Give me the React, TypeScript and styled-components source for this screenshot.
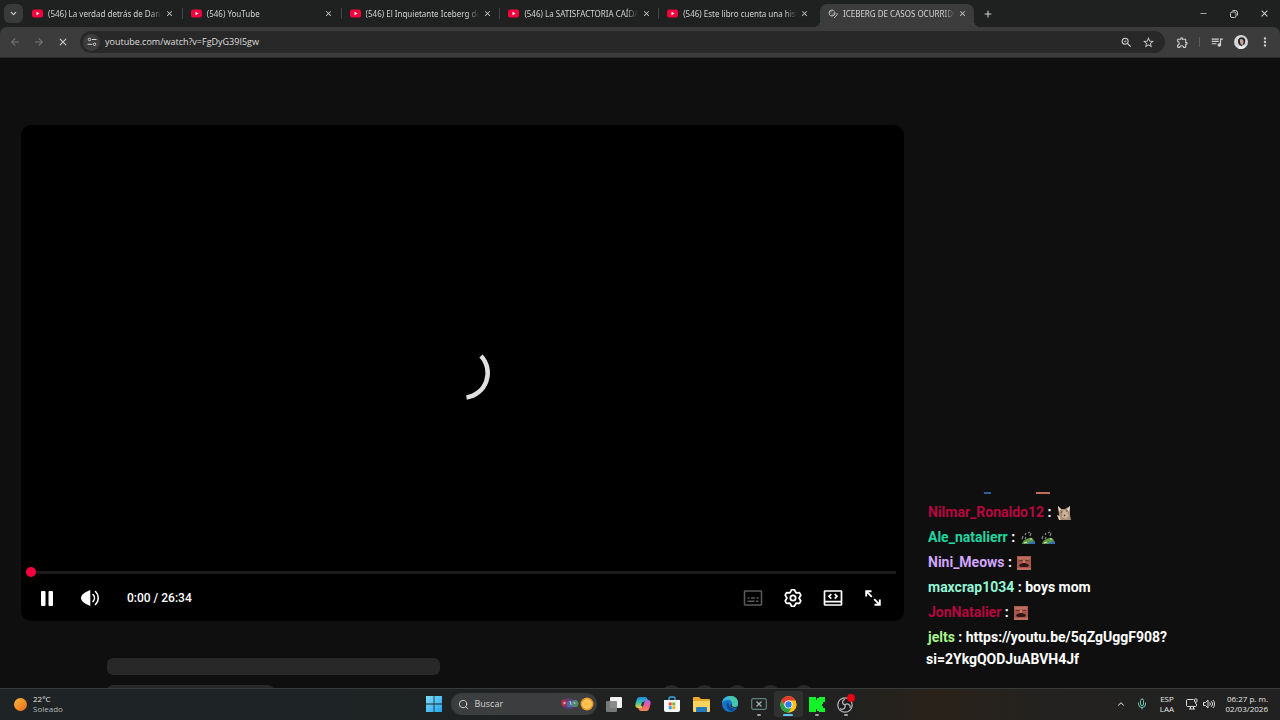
import React from "react";
import styled, { createGlobalStyle } from "styled-components";
import {
  MdArrowBack,
  MdArrowForward,
  MdClose,
  MdMoreVert,
  MdOutlineExtension,
  MdQueueMusic,
  MdStarOutline,
  MdZoomIn,
} from "react-icons/md";
import { ChevronDown, ChevronUp, Mic, Minus, Plus, Search } from "lucide-react";

const GlobalStyle = createGlobalStyle`
  * { box-sizing: border-box; }
  body {
    margin: 0;
    background: #0f0f0f;
    color: #e3e3e3;
    font-family: "Open Sans", "Noto Sans", sans-serif;
  }
  button, input { font: inherit; color: inherit; }
  svg { display: block; flex: none; }
`;

const Shell = styled.div`
  display: flex;
  flex-direction: column;
  height: 100vh;
  overflow: hidden;
`;

const IconButton = styled.button<{ $w?: number; $h?: number; $color?: string; $bg?: string; $radius?: number }>`
  display: flex;
  align-items: center;
  justify-content: center;
  flex: none;
  width: ${(p) => p.$w ?? 20}px;
  height: ${(p) => p.$h ?? 20}px;
  padding: 0;
  border: 0;
  border-radius: ${(p) => p.$radius ?? 0}px;
  background: ${(p) => p.$bg ?? "transparent"};
  color: ${(p) => p.$color ?? "#d0d0d0"};
`;

/* ---------- Browser frame ---------- */

const TabStrip = styled.header`
  display: flex;
  align-items: stretch;
  flex: none;
  height: 27px;
  padding-left: 4px;
  background: #1f2020;
`;

const StripSlot = styled.div`
  display: flex;
  align-items: center;
`;

const TabList = styled.nav`
  display: flex;
  flex: 0 1 950px;
  min-width: 0;
  margin-left: 1px;
`;

const Tab = styled.div<{ $active?: boolean; $divider?: boolean }>`
  position: relative;
  display: flex;
  align-items: center;
  flex: ${(p) => (p.$active ? "0 1 154px" : "1 1 0")};
  min-width: 0;
  margin-top: ${(p) => (p.$active ? 4 : 0)}px;
  margin-left: ${(p) => (p.$active ? 2 : 0)}px;
  padding: 0 ${(p) => (p.$active ? 3 : 5)}px 0 8px;
  padding-bottom: ${(p) => (p.$active ? 4 : 0)}px;
  border-radius: 7px 7px 0 0;
  background: ${(p) => (p.$active ? "#3c3c3c" : "transparent")};

  &::after {
    content: "";
    display: ${(p) => (p.$divider ? "block" : "none")};
    position: absolute;
    right: 0;
    top: 8px;
    width: 1px;
    height: 11px;
    background: #454646;
  }
`;

const TabFoot = styled.span<{ $side: "left" | "right" }>`
  position: absolute;
  bottom: 0;
  ${(p) => p.$side}: -6px;
  width: 6px;
  height: 6px;
  background: radial-gradient(
    circle at ${(p) => (p.$side === "left" ? "0 0" : "100% 0")},
    transparent 6px,
    #3c3c3c 6px
  );
`;

const TabTitle = styled.button`
  flex: 1;
  min-width: 0;
  margin-left: 5px;
  padding: 0;
  border: 0;
  overflow: hidden;
  background: none;
  color: #d5d5d5;
  font-family: "Noto Sans", "Open Sans", sans-serif;
  font-size: 8px;
  line-height: 12px;
  text-align: left;
  white-space: nowrap;
  mask-image: linear-gradient(90deg, #000 calc(100% - 12px), transparent);
`;

const WindowControls = styled.div`
  display: flex;
  align-items: center;
  margin-left: auto;
`;

const Toolbar = styled.div`
  display: flex;
  align-items: center;
  flex: none;
  height: 31px;
  padding: 0 5px 0 4px;
  border-bottom: 1px solid #2a2a2a;
  border-radius: 7px 7px 0 0;
  background: #3c3c3c;
`;

const ToolbarBack = styled.div`
  flex: none;
  background: #1f2020;
`;

const Omnibox = styled.form`
  display: flex;
  align-items: center;
  flex: 1;
  min-width: 0;
  height: 22px;
  margin: 0 7px 0 6px;
  padding: 0 6px 0 3px;
  border-radius: 11px;
  background: #282828;
`;

const UrlInput = styled.input`
  flex: 1;
  min-width: 0;
  margin-left: 5px;
  padding: 0;
  border: 0;
  outline: 0;
  background: none;
  color: #dedede;
  font-size: 9px;
  line-height: 14px;
`;

const Rule = styled.span`
  width: 1px;
  height: 10px;
  margin: 0 7px;
  background: #5c5c5c;
`;

/* ---------- Watch page ---------- */

const Page = styled.main`
  display: grid;
  grid-template-columns: minmax(0, 1fr) 354px;
  grid-template-rows: minmax(0, 1fr);
  column-gap: 22px;
  flex: 1;
  min-height: 0;
  padding-left: 21px;
  overflow: hidden;
  background: #0f0f0f;
`;

const Watch = styled.section`
  padding-top: 67px;
  min-width: 0;
`;

const Player = styled.div`
  display: flex;
  flex-direction: column;
  aspect-ratio: 883 / 496;
  border-radius: 10px;
  background: #000;
`;

const Stage = styled.div`
  display: flex;
  align-items: center;
  justify-content: center;
  flex: 1;
  padding-top: 53px;
`;

const Progress = styled.input`
  appearance: none;
  height: 10px;
  margin: 0 8px 0 5px;
  background: transparent;

  &::-webkit-slider-runnable-track {
    height: 3px;
    background: #1c1c1c;
  }
  &::-webkit-slider-thumb {
    appearance: none;
    width: 10px;
    height: 10px;
    margin-top: -4px;
    border-radius: 50%;
    background: #f5003d;
  }
`;

const Controls = styled.div`
  display: flex;
  align-items: center;
  height: 44px;
  padding: 0 11px 2px 6px;
  font-family: Roboto, sans-serif;
`;

const Time = styled.span`
  margin-left: 14px;
  color: #fff;
  font-size: 12px;
  font-weight: 500;
  line-height: 16px;
`;

const ControlsEnd = styled.div`
  display: flex;
  margin-left: auto;
`;

const Skeletons = styled.div`
  display: flex;
  justify-content: space-between;
  padding: 37px 90px 0 86px;
`;

const SkeletonLines = styled.div`
  display: flex;
  flex-direction: column;
  gap: 10px;
  width: 333px;
`;

const SkeletonLine = styled.div<{ $width: string }>`
  width: ${(p) => p.$width};
  height: 17px;
  border-radius: 6px;
  background: #282828;
`;

const SkeletonDots = styled.div`
  display: flex;
  gap: 12px;
  padding-top: 27px;
`;

const SkeletonDot = styled.div`
  width: 21px;
  height: 21px;
  border-radius: 50%;
  background: #282828;
`;

/* ---------- Chat ---------- */

const Chat = styled.aside`
  display: flex;
  flex-direction: column;
  justify-content: flex-end;
  align-self: end;
  gap: 3px;
  width: 256px;
  height: 196px;
  padding-bottom: 18px;
  overflow: hidden;
  color: #fff;
  font-family: Roboto, sans-serif;
  font-size: 14px;
  font-weight: 700;
  line-height: 22px;
`;

const Message = styled.p`
  flex: none;
  margin: 0;
`;

const EmoteRow = styled.div`
  display: flex;
  flex: none;
  align-items: center;
  gap: 36px;
  height: 22px;
  padding-left: 52px;
`;

const Author = styled.span<{ $color: string }>`
  padding-left: 2px;
  color: ${(p) => p.$color};
`;

const ChatLink = styled.a`
  color: inherit;
  text-decoration: none;
`;

const Emote = styled.svg`
  display: inline-block;
  margin: 0 4px 0 2px;
  vertical-align: -3px;
`;

/* ---------- Taskbar ---------- */

const Taskbar = styled.footer`
  display: grid;
  grid-template-columns: 1fr auto 1fr;
  align-items: center;
  flex: none;
  height: 32px;
  padding-bottom: 1px;
  border-top: 1px solid #3a3c3c;
  background: linear-gradient(90deg, #1e2425 0%, #1e2425 25%, #202121 45%, #202120 66%, #29221a 73%, #232221 82%, #212121 100%);
  font-size: 8px;
  line-height: 10px;
`;

const Weather = styled.div`
  display: flex;
  align-items: center;
  gap: 6px;
  padding-left: 14px;
`;

const Sun = styled.span`
  width: 13px;
  height: 13px;
  border-radius: 50%;
  background: linear-gradient(135deg, #f9b83e, #ea6a17);
`;

const Muted = styled.span`
  display: block;
  color: #b4b7b8;
`;

const Apps = styled.div`
  display: flex;
  align-items: center;
`;

const AppButton = styled.button<{ $focused?: boolean; $running?: boolean }>`
  position: relative;
  display: flex;
  align-items: center;
  justify-content: center;
  width: 29px;
  height: 26px;
  padding: 0;
  border: 0;
  border-radius: 3px;
  background: ${(p) => (p.$focused ? "#2f3030" : "transparent")};

  &::after {
    content: "";
    display: ${(p) => (p.$running ? "block" : "none")};
    position: absolute;
    bottom: 1px;
    left: calc(50% - ${(p) => (p.$focused ? 5 : 2)}px);
    width: ${(p) => (p.$focused ? 10 : 4)}px;
    height: 2px;
    border-radius: 1px;
    background: ${(p) => (p.$focused ? "#5cc3f0" : "#a0a0a0")};
  }
`;

const SearchBox = styled.label`
  display: flex;
  align-items: center;
  gap: 6px;
  width: 146px;
  height: 22px;
  margin: 0 3px 0 2px;
  padding: 0 2px 0 7px;
  border-radius: 11px;
  background: #3b3d3e;
`;

const SearchInput = styled.input`
  flex: 1;
  min-width: 0;
  padding: 0;
  border: 0;
  outline: 0;
  background: none;
  font-size: 9px;
  line-height: 14px;
  &::placeholder { color: #d2d2d2; opacity: 1; }
`;

const Tray = styled.div`
  display: flex;
  align-items: center;
  justify-content: flex-end;
  padding-right: 12px;
`;

const TrayText = styled.div<{ $w: number; $align: string }>`
  width: ${(p) => p.$w}px;
  text-align: ${(p) => p.$align};
  color: #e6e6e6;
  white-space: nowrap;
`;

/* ---------- Drawings ---------- */

const YouTubeMark = () => (
  <svg width="11" height="9" viewBox="0 0 22 18" aria-hidden="true">
    <rect y="1" width="22" height="16" rx="4" fill="#f5003d" />
    <path d="M9 5.500v7l6-3.500z" fill="#fff" />
  </svg>
);

const LoadingMark = () => (
  <svg width="10" height="10" viewBox="0 0 20 20" fill="none" stroke="#b5b5b5" strokeWidth="2" aria-hidden="true">
    <circle cx="8" cy="8" r="6" fill="#6b6b6b" />
    <path d="M4 12L13 3" stroke="#3c3c3c" strokeWidth="2.500" />
    <path d="M18 8v4l-6 6" />
  </svg>
);

const RestoreMark = () => (
  <svg width="8" height="8" viewBox="0 0 16 16" fill="none" stroke="#d8d8d8" strokeWidth="1.800" aria-hidden="true">
    <rect x="1" y="4" width="11" height="11" rx="3" />
    <path d="M5 1h6a4 4 0 0 1 4 4v6" />
  </svg>
);

const SiteMark = () => (
  <svg width="10" height="10" viewBox="0 0 20 20" fill="none" stroke="#d5d5d5" strokeWidth="2" aria-hidden="true">
    <circle cx="5" cy="5" r="2.500" />
    <path d="M10 5h9M1 14.500h9" />
    <circle cx="15" cy="14.500" r="2.500" />
  </svg>
);

const Avatar = () => (
  <svg width="14" height="14" viewBox="0 0 28 28" aria-hidden="true">
    <circle cx="14" cy="14" r="14" fill="#d3d6d7" />
    <path d="M8 12C8 4 20 2 22 9c1 5 0 8-2 11l-2-1-3 4-4-3c-2-2-3-4-3-8z" fill="#24252a" />
    <path d="M12 9c4-2 6 0 7 3 0 4-1 8-3 8s-5-5-4-11z" fill="#c99e96" />
    <path d="M8 27l4-6 5 3 3-3 3 3c-4 4-10 5-15 3z" fill="#efefef" />
  </svg>
);

const Spinner = () => (
  <svg width="56" height="56" viewBox="0 0 56 56" fill="none" aria-label="Cargando" role="img">
    <path d="M46 11A24.800 24.800 0 0 1 31.500 52.500" stroke="#e0e0e0" strokeWidth="4.500" />
  </svg>
);

const PauseMark = () => (
  <svg width="14" height="16" viewBox="0 0 14 16" fill="#fff" aria-hidden="true">
    <rect x="1" y="1" width="4.500" height="15" rx="1" />
    <rect x="8.500" y="1" width="4.500" height="15" rx="1" />
  </svg>
);

const VolumeMark = () => (
  <svg width="20" height="18" viewBox="0 0 20 18" fill="none" stroke="#fff" strokeWidth="1.600" strokeLinecap="round" aria-hidden="true">
    <path d="M10.300 1v16C6 15.500 1 12.500 1 9s5-6.500 9.300-8z" fill="#fff" stroke="none" />
    <path d="M13 5.500a5 5 0 0 1 0 7M15.500 2.500a9 9 0 0 1 0 13" />
  </svg>
);

const CaptionsMark = () => (
  <svg width="20" height="18" viewBox="0 0 20 18" fill="none" stroke="#5b5b5b" strokeWidth="1.500" aria-hidden="true">
    <rect x="1.500" y="2" width="17" height="14" rx=".6" />
    <path d="M4.500 9h2M8 9h4M13.500 9h2M4.500 12.300h7M13 12.300h2.500" />
  </svg>
);

const GearMark = () => (
  <svg width="22" height="22" viewBox="0 0 24 24" fill="none" stroke="#fff" strokeWidth="1.900" strokeLinejoin="round" aria-hidden="true">
    <path d="M10.500 3h3l1.800 3.300 3.740-.1 1.500 2.600L18.600 12l1.940 3.200-1.500 2.600-3.740-.1L13.500 21h-3l-1.800-3.300-3.740.1-1.500-2.600L5.400 12 3.460 8.800l1.500-2.600 3.740.1z" />
    <circle cx="12" cy="12" r="2.900" />
  </svg>
);

const TheaterMark = () => (
  <svg width="20" height="18" viewBox="0 0 20 18" fill="none" stroke="#fff" strokeWidth="1.700" aria-hidden="true">
    <rect x="1.500" y="2" width="17" height="14" rx=".6" />
    <path d="M1.500 12.700h17M8.300 5L6 7.300l2.300 2.300M11.700 5L14 7.300l-2.300 2.300" />
  </svg>
);

const FullscreenMark = () => (
  <svg width="18" height="18" viewBox="0 0 18 18" fill="none" stroke="#fff" strokeWidth="1.900" aria-hidden="true">
    <path d="M2.200 7.500V2.200h5.300M2.200 2.200l5.600 5.600M15.800 10.500v5.300h-5.300M15.800 15.800l-5.600-5.600" />
  </svg>
);

const CatEmote = () => (
  <Emote width="14" height="14" viewBox="0 0 14 14" aria-hidden="true">
    <path d="M1 0l3 3h4l5-3v9l1 5H4L2 9z" fill="#a98d75" />
    <path d="M1 0l3 3-2 3zM13 0l-3 3 2 3z" fill="#e5ddd2" />
    <path d="M5 5l2-1 3 1 2 5-3 3-4-2z" fill="#c9b19a" />
    <path d="M4 6h1.500M9 5h1.500M7 9l1 1" stroke="#4a382c" strokeWidth="1.200" />
    <path d="M0 9l3 1 1 4H2z" fill="#d8c8b3" />
  </Emote>
);

const FrogEmote = () => (
  <Emote width="14" height="14" viewBox="0 0 14 14" aria-hidden="true">
    <path d="M1 13c1-4 4-5 7-6 3-1 5 1 5 4l-3 2z" fill="#5d9a43" />
    <path d="M7 12l7-2v3H8z" fill="#2f6fc0" />
    <path d="M9 8h2M3 12l3-1" stroke="#d9e8d0" strokeWidth="1" />
    <path d="M1 8l1-3M4 4l1-2M7 2l2-1M10 2l-1 3M4 8l1-2" stroke="#85898c" strokeWidth="1.200" />
  </Emote>
);

const FaceEmote = () => (
  <Emote width="14" height="14" viewBox="0 0 14 14" aria-hidden="true">
    <rect width="14" height="14" fill="#a8574a" />
    <path d="M1 1h12v2.500H1z" fill="#bd705e" />
    <path d="M2 4.500h3.500M8.500 4.500H12" stroke="#6b332d" strokeWidth="1.200" />
    <path d="M6 4h2v4H6z" fill="#c77b68" />
    <path d="M2 10c0-2 3-3 5-3s5 1 5 3l-2 1H4z" fill="#2f1516" />
    <path d="M0 12h14v2H0z" fill="#be6e5c" />
  </Emote>
);

const BlueEmote = () => (
  <Emote width="14" height="14" viewBox="0 0 14 14" aria-hidden="true">
    <path d="M3 3h8v11H4z" fill="#2d5f9e" />
  </Emote>
);

const StartMark = () => (
  <svg width="16" height="16" viewBox="0 0 16 16" fill="url(#startFill)" aria-hidden="true">
    <defs>
      <linearGradient id="startFill" x1="0" y1="0" x2="1" y2="1">
        <stop offset="0" stopColor="#7fdcfb" />
        <stop offset="1" stopColor="#24a5ee" />
      </linearGradient>
    </defs>
    <path d="M0 0h7.600v7.600H0zM8.400 0H16v7.600H8.400zM0 8.400h7.600V16H0zM8.400 8.400H16V16H8.400z" />
  </svg>
);

const SearchArt = () => (
  <svg width="35" height="16" viewBox="0 0 35 16" aria-hidden="true">
    <ellipse cx="9" cy="7.500" rx="7.500" ry="5.500" fill="#543d70" />
    <circle cx="4.500" cy="7" r="3.500" fill="#a92f4b" />
    <circle cx="4.500" cy="7" r="1.200" fill="#e9a3b0" />
    <circle cx="10" cy="8" r="3.500" fill="#4b6ba8" />
    <circle cx="15" cy="7.500" r="3.500" fill="#55886b" />
    <path d="M10 5l1 4M14 6l1 2" stroke="#b8d0e8" strokeWidth="1" />
    <circle cx="27" cy="8" r="6.500" fill="#ee9c22" />
    <circle cx="27" cy="8" r="4.200" fill="#f9bd4a" stroke="#fbd377" />
  </svg>
);

const TaskViewMark = () => (
  <svg width="16" height="15" viewBox="0 0 16 15" aria-hidden="true">
    <rect x="4" y="0" width="12" height="11" rx="1" fill="#f1f1f1" />
    <rect x="0" y="4" width="11" height="11" rx="1" fill="#818181" opacity=".92" />
  </svg>
);

const CopilotMark = () => (
  <svg width="16" height="16" viewBox="0 0 16 16" aria-hidden="true">
    <defs>
      <linearGradient id="copilotLeft" x1="0" y1="0" x2="0" y2="1">
        <stop offset="0" stopColor="#2488ee" />
        <stop offset=".5" stopColor="#35c4a4" />
        <stop offset="1" stopColor="#f0cd39" />
      </linearGradient>
      <linearGradient id="copilotRight" x1="0" y1="0" x2="0" y2="1">
        <stop offset="0" stopColor="#a267ed" />
        <stop offset=".5" stopColor="#f05a94" />
        <stop offset="1" stopColor="#f48b46" />
      </linearGradient>
    </defs>
    <path d="M6 1h4c2 0 2 2 3 3l-4 1-2 7H3C0 12 0 9 1 6l1-3c1-2 2-2 4-2z" fill="url(#copilotLeft)" />
    <path d="M10 15H6c-2 0-2-2-3-3h3c1 0 2-1 2-2l2-6h3c3 0 3 3 2 6l-1 3c-1 2-2 2-4 2z" fill="url(#copilotRight)" />
    <path d="M7 6h2l-1 4H6z" fill="#263040" />
  </svg>
);

const StoreMark = () => (
  <svg width="16" height="17" viewBox="0 0 16 17" aria-hidden="true">
    <path d="M5 5V2.500Q5 1 6.500 1h3Q11 1 11 2.500V5" fill="none" stroke="#35a8e2" strokeWidth="1.400" />
    <path d="M0 4h16v10q0 2-2 2H2q-2 0-2-2z" fill="#f4f6f7" />
    <path d="M4.700 6.500h3v3h-3z" fill="#e8502f" />
    <path d="M8.300 6.500h3v3h-3z" fill="#7cb52c" />
    <path d="M4.700 10.200h3v3h-3z" fill="#2b9fe0" />
    <path d="M8.300 10.200h3v3h-3z" fill="#f3b51d" />
  </svg>
);

const FolderMark = () => (
  <svg width="17" height="15" viewBox="0 0 17 15" aria-hidden="true">
    <path d="M0 1q0-1 1-1h5l2 2h8q1 0 1 1v11H0z" fill="#e7a92c" />
    <path d="M0 4h17v10q0 1-1 1H1q-1 0-1-1z" fill="#fbd45f" />
    <path d="M3 15v-4q0-1 1-1h9q1 0 1 1v4z" fill="#2579be" />
  </svg>
);

const EdgeMark = () => (
  <svg width="16" height="16" viewBox="0 0 16 16" aria-hidden="true">
    <circle cx="8" cy="8" r="8" fill="#1674c6" />
    <path d="M0 7C1 2 4 0 8 0c5 0 8 3 8 7 0 3-2 4-4 4-2 0-3-1-2-2 1-3-1-5-4-5-3 0-5 1-6 3z" fill="#38b6e0" />
    <path d="M9 0c4 0 7 3 7 7 0 3-2 4-4 4-2 0-3-1-2-2 1-2 0-3-1-4 0-2-1-3-3-4z" fill="#46c8a8" />
    <path d="M6 6c-3 3-1 8 3 9 2 0 4-1 6-3-4 2-8-1-9-6z" fill="#0b4a94" />
    <path d="M8.500 8c-.5 3 3 4.500 6.500 3.500l.5-.5-3 0c-2 0-3-1-2.500-2z" fill="#202121" />
  </svg>
);

const XBoxMark = () => (
  <svg width="16" height="12" viewBox="0 0 16 12" fill="none" stroke="#62827f" aria-hidden="true">
    <rect x=".7" y=".7" width="14.600" height="10.600" rx="1.500" strokeWidth="1.200" />
    <path d="M5.500 3.500l5 5M10.500 3.500l-5 5" stroke="#9dbab5" strokeWidth="1.200" />
  </svg>
);

const ChromeMark = () => (
  <svg width="17" height="17" viewBox="0 0 48 48" aria-hidden="true">
    <circle cx="24" cy="24" r="23" fill="#fbc116" />
    <path d="M4 12.500A23 23 0 0 0 23.500 47L34 29.500 24 24l-10 5.500z" fill="#25a04b" />
    <path d="M4 12.500A23 23 0 0 1 43.900 12.500H24A11.500 11.500 0 0 0 13 27z" fill="#e33b2e" />
    <circle cx="24" cy="24" r="11.500" fill="#fff" />
    <circle cx="24" cy="24" r="9" fill="#2f7de9" />
  </svg>
);

const KickMark = () => (
  <svg width="16" height="15" viewBox="0 0 16 15" aria-hidden="true">
    <path d="M0 0h7v3h1V1h2V0h6v5h-2v2h-1v2h1v2h2v4h-6v-1H8v-2H7v3H0z" fill="#12f32a" />
  </svg>
);

const ObsMark = () => (
  <svg width="18" height="20" viewBox="0 0 18 20" aria-hidden="true">
    <circle cx="8" cy="11" r="7.200" fill="#1c1c1e" stroke="#b9b9b9" strokeWidth="1.200" />
    <path d="M8 11C4.500 10 5 6 8 5.500M8 11c2.500-2.500 6 0 5 3M8 11c1 3.500-2.500 5.500-5 3.500" fill="none" stroke="#b9b9b9" strokeWidth="1.200" />
    <circle cx="14" cy="4" r="4" fill="#e60012" />
  </svg>
);

const NetworkMark = () => (
  <svg width="12" height="12" viewBox="0 0 12 12" fill="none" stroke="#dcdcdc" aria-hidden="true">
    <path d="M7.500 1.500H1.500q-1 0-1 1v5q0 1 1 1h8q1 0 1-1V6M3 11h6M4.500 8.500V11M7.500 8.500V11" />
    <rect x="8.500" y="1" width="2.500" height="3" rx=".5" />
    <path d="M9.700 4v2" />
  </svg>
);

const SpeakerMark = () => (
  <svg width="12" height="10" viewBox="0 0 12 10" fill="none" stroke="#dcdcdc" strokeLinejoin="round" aria-hidden="true">
    <path d="M.5 3.500h2L5 1v8L2.500 6.500h-2zM6.700 3.500a2 2 0 0 1 0 3M8.300 2.200a4 4 0 0 1 0 5.600M10 1a6 6 0 0 1 0 8" />
  </svg>
);

/* ---------- Data ---------- */

const tabs = [
  "(546) La verdad detrás de Danc",
  "(546) YouTube",
  "(546) El Inquietante Iceberg de",
  "(546) La SATISFACTORIA CAÍDA",
  "(546) Este libro cuenta una hist",
  "ICEBERG DE CASOS OCURRIDO",
];

const apps = [
  { name: "Vista de tareas", icon: <TaskViewMark /> },
  { name: "Copilot", icon: <CopilotMark /> },
  { name: "Microsoft Store", icon: <StoreMark /> },
  { name: "Explorador de archivos", icon: <FolderMark /> },
  { name: "Edge", icon: <EdgeMark /> },
  { name: "Consola", icon: <XBoxMark />, running: true },
  { name: "Chrome", icon: <ChromeMark />, running: true, focused: true },
  { name: "Kick", icon: <KickMark />, running: true },
  { name: "OBS Studio", icon: <ObsMark />, running: true },
];

export default function App() {
  return (
    <>
      <GlobalStyle />
      <Shell>
        <TabStrip>
          <StripSlot>
            <IconButton $w={19} $h={19} $bg="#3a3a3a" $radius={6} aria-label="Buscar pestañas">
              <ChevronDown size={9} strokeWidth={3} />
            </IconButton>
          </StripSlot>
          <TabList>
            {tabs.map((title, i) => {
              const active = i === tabs.length - 1;
              return (
                <Tab key={title} $active={active} $divider={i < tabs.length - 2}>
                  {active && <TabFoot $side="left" />}
                  {active ? <LoadingMark /> : <YouTubeMark />}
                  <TabTitle>{title}</TabTitle>
                  <IconButton $w={16} $h={16} aria-label="Cerrar pestaña">
                    <MdClose size={9} />
                  </IconButton>
                  {active && <TabFoot $side="right" />}
                </Tab>
              );
            })}
          </TabList>
          <StripSlot>
            <IconButton $w={28} aria-label="Nueva pestaña">
              <Plus size={10} strokeWidth={2.5} />
            </IconButton>
          </StripSlot>
          <WindowControls>
            <IconButton $w={30} aria-label="Minimizar"><Minus size={9} /></IconButton>
            <IconButton $w={31} aria-label="Restaurar"><RestoreMark /></IconButton>
            <IconButton $w={31} aria-label="Cerrar"><MdClose size={11} /></IconButton>
          </WindowControls>
        </TabStrip>

        <ToolbarBack>
          <Toolbar>
            <IconButton $w={22} $color="#787878" aria-label="Atrás"><MdArrowBack size={12} /></IconButton>
            <IconButton $w={26} $color="#787878" aria-label="Adelante"><MdArrowForward size={12} /></IconButton>
            <IconButton $w={22} aria-label="Detener"><MdClose size={12} /></IconButton>
            <Omnibox>
              <IconButton $w={17} $h={17} $bg="#3c3c3c" $radius={9} type="button" aria-label="Información del sitio">
                <SiteMark />
              </IconButton>
              <UrlInput aria-label="Dirección" defaultValue="youtube.com/watch?v=FgDyG39I5gw" />
              <IconButton $w={22} type="button" aria-label="Zoom"><MdZoomIn size={13} /></IconButton>
              <IconButton $w={22} type="button" aria-label="Favorito"><MdStarOutline size={13} /></IconButton>
            </Omnibox>
            <IconButton aria-label="Extensiones"><MdOutlineExtension size={13} /></IconButton>
            <Rule />
            <IconButton aria-label="Control multimedia"><MdQueueMusic size={14} /></IconButton>
            <IconButton $w={28} aria-label="Perfil"><Avatar /></IconButton>
            <IconButton aria-label="Más"><MdMoreVert size={14} /></IconButton>
          </Toolbar>
        </ToolbarBack>

        <Page>
          <Watch>
            <Player>
              <Stage><Spinner /></Stage>
              <Progress type="range" min={0} max={1594} defaultValue={0} aria-label="Progreso" />
              <Controls>
                <IconButton $w={40} $h={32} aria-label="Pausar"><PauseMark /></IconButton>
                <IconButton $w={46} $h={32} aria-label="Volumen"><VolumeMark /></IconButton>
                <Time>0:00 / 26:34</Time>
                <ControlsEnd>
                  <IconButton $w={40} $h={32} aria-label="Subtítulos"><CaptionsMark /></IconButton>
                  <IconButton $w={40} $h={32} aria-label="Configuración"><GearMark /></IconButton>
                  <IconButton $w={40} $h={32} aria-label="Modo cine"><TheaterMark /></IconButton>
                  <IconButton $w={40} $h={32} aria-label="Pantalla completa"><FullscreenMark /></IconButton>
                </ControlsEnd>
              </Controls>
            </Player>
            <Skeletons>
              <SkeletonLines>
                <SkeletonLine $width="100%" />
                <SkeletonLine $width="50%" />
              </SkeletonLines>
              <SkeletonDots>
                {[0, 1, 2, 3, 4].map((n) => <SkeletonDot key={n} />)}
              </SkeletonDots>
            </Skeletons>
          </Watch>

          <Chat>
            <EmoteRow><BlueEmote /><FaceEmote /></EmoteRow>
            <Message><Author $color="#b8063f">Nilmar_Ronaldo12</Author> : <CatEmote /></Message>
            <Message><Author $color="#1fd6a0">Ale_natalierr</Author> : <FrogEmote /><FrogEmote /></Message>
            <Message><Author $color="#d3a5ff">Nini_Meows</Author> : <FaceEmote /></Message>
            <Message><Author $color="#93f5d5">maxcrap1034</Author> : boys mom</Message>
            <Message><Author $color="#b8063f">JonNatalier</Author> : <FaceEmote /></Message>
            <Message>
              <Author $color="#a8f58a">jelts</Author> : <ChatLink href="#chat-link">https://youtu.be/5qZgUggF908?si=2YkgQODJuABVH4Jf</ChatLink>
            </Message>
          </Chat>
        </Page>

        <Taskbar>
          <Weather>
            <Sun />
            <div>22°C<Muted>Soleado</Muted></div>
          </Weather>
          <Apps>
            <AppButton aria-label="Inicio"><StartMark /></AppButton>
            <SearchBox>
              <Search size={11} color="#d8d8d8" />
              <SearchInput placeholder="Buscar" aria-label="Buscar" />
              <SearchArt />
            </SearchBox>
            {apps.map((a) => (
              <AppButton key={a.name} aria-label={a.name} $running={a.running} $focused={a.focused}>
                {a.icon}
              </AppButton>
            ))}
          </Apps>
          <Tray>
            <IconButton $w={22} aria-label="Iconos ocultos"><ChevronUp size={10} strokeWidth={2.5} /></IconButton>
            <IconButton $w={20} $color="#6cc4b4" aria-label="Micrófono"><Mic size={12} /></IconButton>
            <TrayText $w={30} $align="center">ESP<br />LAA</TrayText>
            <IconButton $w={20} aria-label="Red"><NetworkMark /></IconButton>
            <IconButton $w={14} aria-label="Sonido"><SpeakerMark /></IconButton>
            <TrayText $w={52} $align="right">06:27 p. m.<br />02/03/2026</TrayText>
          </Tray>
        </Taskbar>
      </Shell>
    </>
  );
}
